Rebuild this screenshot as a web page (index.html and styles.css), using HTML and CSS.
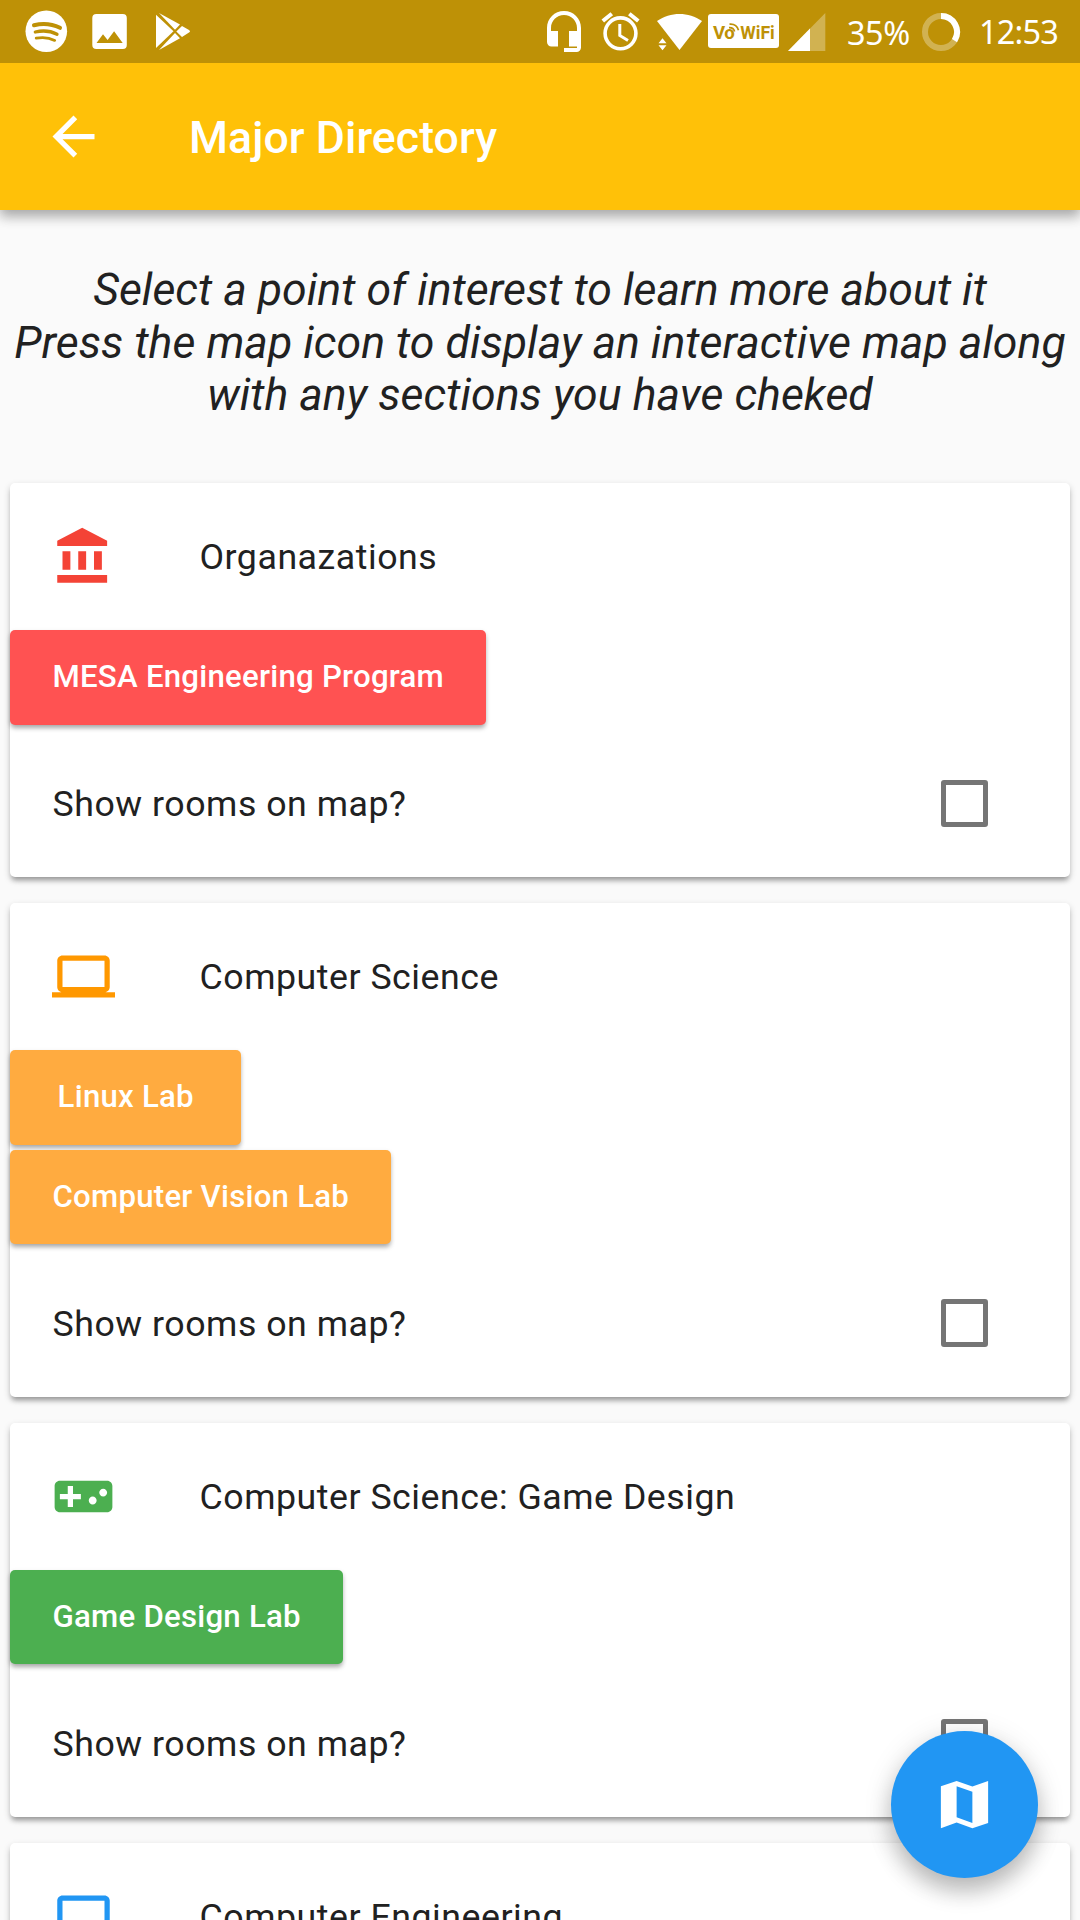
FILE: index.html
```html
<!DOCTYPE html>
<html lang="en">
<head>
<meta charset="utf-8">
<title>Major Directory</title>
<link rel="stylesheet" href="styles.css">
</head>
<body>
<div class="screen">
  <header class="top">
    <div class="statusbar">
      <svg class="status-icons" width="190" height="63" viewBox="0 0 190 63">
        <circle cx="46.3" cy="31.3" r="20.8" fill="#fff"/>
        <g fill="none" stroke="#be9106" stroke-linecap="round">
          <path d="M34 25.2c9-2.3 18-1.400 26 2.600" stroke-width="4"/>
          <path d="M35.300 32c8-1.800 15.500-1 21.700 2.200" stroke-width="3.300"/>
          <path d="M36.200 38.200c7-1.300 13-.6 18.500 2.200" stroke-width="2.800"/>
        </g>
        <rect x="92.300" y="14" width="34.500" height="35" rx="4" fill="#fff"/>
        <path d="M96.500 43l6.500-8.700 4.600 5.700 6.500-8.700 8.600 11.700z" fill="#be9106"/>
        <g fill="#fff">
          <path d="M156 14.800l17.500 16.500L156 48z"/>
          <path d="M159 13l21 11.500-5 5.200z"/>
          <path d="M159 50l21-11.800-5-5.200z"/>
          <path d="M182 26l7 4c1.300.8 1.300 1.800 0 2.600l-7 4.400-5.700-5.600z"/>
        </g>
      </svg>
      <div class="status-right">
        <svg class="status-icons" width="300" height="63" viewBox="540 0 300 63">
          <path d="M564 11c-9.500 0-17 7.500-17 17v14c0 2.500 2 4.500 4.500 4.500h6.500V31h-7v-3c0-7.200 5.800-13 13-13s13 5.800 13 13v3h-8v15.500h8v1.500h-13v4h12.500c2.500 0 4.500-2 4.500-4.500V28c0-9.500-7.500-17-17-17z" fill="#fff"/>
          <g fill="none" stroke="#fff">
            <circle cx="620.500" cy="33.300" r="15.400" stroke-width="3.600"/>
            <path d="M619.800 24v11.500l8.200 5" stroke-width="3"/>
            <path d="M602.800 21l9-7.300M638.300 21l-9-7.300" stroke-width="4"/>
          </g>
          <path d="M657 21c13.500-9.500 31.500-9.500 45 0l-22.500 29z" fill="#fff"/>
          <path d="M658.500 43.200l4-5 4 5zM658.500 45.300l4 4.900 4-4.900z" fill="#fff"/>
          <rect x="708" y="14" width="71" height="34" rx="3" fill="#fff"/>
          <path d="M729 27.600c2.800-.2 4.800 1.200 5.600 3.800M729.500 24.200c4.600-.4 7.800 2 9 6" fill="none" stroke="#be9106" stroke-width="1.700"/>
          <text class="vowifi" x="713" y="38.800">V</text>
          <text class="vowifi" x="724.300" y="38.800" textLength="10.500" lengthAdjust="spacingAndGlyphs">o</text>
          <text class="vowifi" x="740.300" y="38.800" textLength="34.500" lengthAdjust="spacingAndGlyphs">WiFi</text>
          <path d="M825.300 13v38H788z" fill="#fff" fill-opacity=".3"/>
          <path d="M810 28.500V51h-22z" fill="#fff"/>
        </svg>
        <span class="battery-text">35%</span>
        <svg class="ring" width="40" height="40" viewBox="0 0 40 40">
          <circle cx="20" cy="20" r="16" fill="none" stroke="#fff" stroke-opacity=".3" stroke-width="6"/>
          <path d="M20 4A16 16 0 0 1 33.500 28.600" fill="none" stroke="#fff" stroke-width="6"/>
        </svg>
        <span class="clock">12:53</span>
      </div>
    </div>
    <div class="appbar">
      <svg class="icon" viewBox="0 0 24 24"><path d="M20 11H7.830l5.590-5.590L12 4l-8 8 8 8 1.410-1.410L7.830 13H20v-2z"/></svg>
      <h1 class="title">Major Directory</h1>
    </div>
  </header>
  <main>
    <p class="intro">Select a point of interest to learn more about it<br>Press the map icon to display an interactive map along<br>with any sections you have cheked</p>
    <section class="card">
      <div class="tile">
        <svg class="icon red" viewBox="0 0 24 24"><path d="M4 10v7h3v-7H4zm6 0v7h3v-7h-3zM2 22h19v-3H2v3zm14-12v7h3v-7h-3zm-4.500-9L2 6v2h19V6l-9.500-5z"/></svg>
        <span>Organazations</span>
      </div>
      <div class="buttons"><button class="btn btn-red">MESA Engineering Program</button></div>
      <label class="tile check"><span>Show rooms on map?</span><i class="box"></i></label>
    </section>
    <section class="card">
      <div class="tile">
        <svg class="icon orange" viewBox="0 0 24 24"><path d="M20 18c1.100 0 1.990-.9 1.990-2L22 6c0-1.100-.9-2-2-2H4c-1.100 0-2 .9-2 2v10c0 1.100.9 2 2 2H0v2h24v-2h-4zM4 6h16v10H4V6z"/></svg>
        <span>Computer Science</span>
      </div>
      <div class="buttons"><button class="btn btn-orange">Linux Lab</button><button class="btn btn-orange">Computer Vision Lab</button></div>
      <label class="tile check"><span>Show rooms on map?</span><i class="box"></i></label>
    </section>
    <section class="card">
      <div class="tile">
        <svg class="icon green" viewBox="0 0 24 24"><path d="M21 6H3c-1.100 0-2 .9-2 2v8c0 1.100.9 2 2 2h18c1.100 0 2-.9 2-2V8c0-1.100-.9-2-2-2zm-10 7H8v3H6v-3H3v-2h3V8h2v3h3v2zm4.500 2c-.83 0-1.500-.67-1.500-1.500s.67-1.500 1.500-1.500 1.500.67 1.500 1.500-.67 1.500-1.500 1.500zm4-3c-.83 0-1.500-.67-1.500-1.500S18.670 9 19.500 9s1.500.67 1.500 1.500-.67 1.500-1.500 1.500z"/></svg>
        <span>Computer Science: Game Design</span>
      </div>
      <div class="buttons"><button class="btn btn-green">Game Design Lab</button></div>
      <label class="tile check"><span>Show rooms on map?</span><i class="box"></i></label>
    </section>
    <section class="card">
      <div class="tile">
        <svg class="icon blue" viewBox="0 0 24 24"><path d="M20 18c1.100 0 1.990-.9 1.990-2L22 6c0-1.100-.9-2-2-2H4c-1.100 0-2 .9-2 2v10c0 1.100.9 2 2 2H0v2h24v-2h-4zM4 6h16v10H4V6z"/></svg>
        <span>Computer Engineering</span>
      </div>
    </section>
  </main>
  <div class="fab"><svg class="icon" viewBox="0 0 24 24"><path d="M21 3l-6 2.100L9 3 3 5v16l6-2.100 6 2.100 6-2V3zM15 19l-6-2.110V5l6 2.110V19z"/></svg></div>
</div>
</body>
</html>
```
FILE: styles.css
```css
* { box-sizing: border-box; }
body {
  margin: 0;
  background: #fafafa;
  color: #212121;
  font-family: Roboto, "Liberation Sans", sans-serif;
}
.screen {
  position: relative;
  width: 1080px;
  height: 1920px;
  overflow: hidden;
}
.top {
  background: #ffc108;
  color: #fff;
  box-shadow: 0 7px 11px rgba(0, 0, 0, .24), 0 2px 16px rgba(0, 0, 0, .16);
}
.statusbar {
  height: 63px;
  display: flex;
  justify-content: space-between;
  background: #be9106;
}
.status-icons { display: block; }
.status-right {
  width: 540px;
  display: flex;
  align-items: center;
  font-family: "Noto Sans", sans-serif;
  font-size: 32.5px;
  line-height: 63px;
  white-space: nowrap;
}
.vowifi {
  font: bold 18.600px Roboto, sans-serif;
  fill: #be9106;
}
.battery-text { width: 74px; padding: 1px 0 0 7px; letter-spacing: -.5px; }
.ring { margin: 0 18px 0 7px; flex: none; }
.clock { letter-spacing: -.8px; }
.appbar {
  height: 147px;
  display: flex;
  align-items: center;
  padding-left: 42px;
}
.icon {
  width: 63px;
  height: 63px;
  flex: none;
  fill: currentColor;
}
.title {
  margin: 0 0 0 84px;
  padding-top: 2px;
  font-size: 44.6px;
  font-weight: 500;
  letter-spacing: .07px;
}
.intro {
  height: 273px;
  margin: 0;
  padding-top: 54px;
  text-align: center;
  font-size: 44.6px;
  line-height: 52.5px;
  letter-spacing: .03px;
  font-style: italic;
  white-space: nowrap;
}
.card {
  margin: 0 10.5px 26.25px 10px;
  border-radius: 5px;
  background: #fff;
  box-shadow: 0 5px 5px -2px rgba(0, 0, 0, .27), 0 3px 7px rgba(0, 0, 0, .2);
}
.tile {
  height: 147px;
  display: flex;
  align-items: center;
  gap: 84.5px;
  padding: 0 42px;
  font-size: 35.7px;
  letter-spacing: .53px;
}
.tile span { padding-top: 1px; }
.check { justify-content: space-between; padding-right: 81.4px; }
.check span { padding: 2px 0 0 .5px; }
.box {
  width: 47.25px;
  height: 47.25px;
  border: 5.25px solid #757575;
  border-radius: 3px;
}
.buttons {
  display: flex;
  flex-direction: column;
  align-items: flex-start;
  gap: 5.25px;
  padding-bottom: 5.25px;
}
.btn {
  height: 94.5px;
  min-width: 231px;
  padding: 0 42px 1px 42.5px;
  border: 0;
  border-radius: 5px;
  color: #fff;
  font: 500 31.2px Roboto, sans-serif;
  letter-spacing: .24px;
  box-shadow: 0 4px 5px -1px rgba(0, 0, 0, .26), 0 2px 5px rgba(0, 0, 0, .14);
}
.red { color: #f44336; }
.orange { color: #ff9800; }
.green { color: #4caf50; }
.blue { color: #2196f3; }
.btn-red { background: #ff5252; }
.btn-orange { background: #ffab40; }
.btn-green { background: #4caf50; }
.fab {
  position: absolute;
  right: 42px;
  bottom: 42px;
  width: 147px;
  height: 147px;
  display: flex;
  align-items: center;
  justify-content: center;
  border-radius: 50%;
  background: #2196f3;
  color: #fff;
  box-shadow: 0 14px 22px rgba(0, 0, 0, .22), 0 4px 30px rgba(0, 0, 0, .12);
}
```
